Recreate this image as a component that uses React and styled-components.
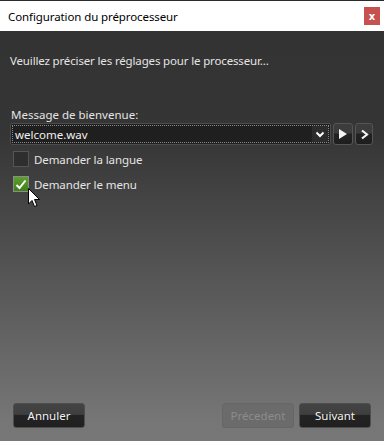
import React from "react"
import styled, { createGlobalStyle } from "styled-components"

const GlobalStyle = createGlobalStyle`
  html, body {
    margin: 0;
    padding: 0;
    background: #333;
  }
  body {
    font-family: "Noto Sans", "Open Sans", sans-serif;
    font-size: 12px;
  }
`

const Window = styled.div`
  width: 384px;
  height: 441px;
  display: flex;
  flex-direction: column;
  border-top: 1px solid #2b2b2b;
  box-sizing: border-box;
`

const TitleBar = styled.div`
  height: 30px;
  background: #fff;
  display: flex;
  align-items: center;
  justify-content: space-between;
  padding-left: 8px;
  flex-shrink: 0;
`

const Title = styled.span`
  color: #000;
  font-size: 11.5px;
  letter-spacing: -0.1px;
`

const CloseButton = styled.div`
  width: 16px;
  height: 18px;
  margin-right: 4px;
  background: #c75050;
  color: #fff;
  font-size: 10px;
  font-weight: bold;
  display: flex;
  align-items: center;
  justify-content: center;
  font-family: "DejaVu Sans", sans-serif;
`

const Body = styled.div`
  position: relative;
  flex: 1;
  display: flex;
  flex-direction: column;
  padding: 22px 11px 13px 10px;
  background: linear-gradient(to bottom, #333 0%, #353535 25%, #767676 95%, #777 100%);
  color: #e4e4e4;
`

const Intro = styled.div`
  line-height: 16px;
  font-size: 11.5px;
  letter-spacing: -0.15px;
`

const FieldLabel = styled.div`
  margin-top: 38px;
  line-height: 16px;
  font-size: 11.5px;
  padding-left: 1px;
`

const ComboRow = styled.div`
  display: flex;
  gap: 2px;
  height: 22px;
`

const Combo = styled.div`
  width: 321px;
  box-sizing: border-box;
  border: 1px solid #4c4c4c;
  border-radius: 2px;
  background: #1f1f1f;
  padding: 1px;
  display: flex;
`

const ComboInner = styled.div`
  flex: 1;
  display: flex;
  align-items: center;
  border: 1px dotted #8a8a8a;
  padding-left: 2px;
  font-size: 11.5px;
  color: #f0f0f0;
`

const ComboValue = styled.span`
  flex: 1;
`

const ComboArrow = styled.div`
  width: 16px;
  height: 100%;
  background: #2c2c2c;
  display: flex;
  align-items: center;
  justify-content: center;
`

const SmallButton = styled.div`
  width: ${p => p.$w}px;
  box-sizing: border-box;
  border: 1px solid #555;
  border-radius: 3px;
  background: linear-gradient(to bottom, #3c3c3c 0%, #3c3c3c 45%, #222 50%, #1e1e1e 100%);
  display: flex;
  align-items: center;
  justify-content: center;
`

const CheckRow = styled.div`
  display: flex;
  align-items: center;
  gap: 5px;
  height: 16px;
  margin-top: ${p => p.$top}px;
  padding-left: 3px;
`

const Box = styled.div`
  width: 16px;
  height: 16px;
  box-sizing: border-box;
  border: 1px solid ${p => (p.$checked ? "#8c8c8c" : "#555")};
  background: ${p => (p.$checked ? "linear-gradient(#5f9f2c, #3f7f1a)" : "#2e2e2e")};
  display: flex;
  align-items: center;
  justify-content: center;
`

const CheckLabel = styled.span`
  font-size: 11.5px;
  color: #e4e4e4;
  letter-spacing: -0.1px;
`

const Footer = styled.div`
  margin-top: auto;
  display: flex;
  align-items: center;
  gap: 5px;
  padding-left: 3px;
  padding-right: 2px;
`

const Button = styled.div`
  width: 72px;
  height: 25px;
  box-sizing: border-box;
  border-radius: 3px;
  display: flex;
  align-items: center;
  justify-content: center;
  font-size: 11.5px;
  border: 1px solid ${p => (p.$disabled ? "#666" : "#4e4e4e")};
  background: ${p =>
    p.$disabled
      ? "#6b6b6b"
      : "linear-gradient(to bottom, #444 0%, #3e3e3e 45%, #232323 50%, #202020 100%)"};
  color: ${p => (p.$disabled ? "#8c8c8c" : "#f2f2f2")};
`

const Spacer = styled.div`
  flex: 1;
`

const Cursor = styled.svg`
  position: absolute;
  left: 28px;
  top: 157px;
`

const ChevronDown = () => (
  <svg width="10" height="7" viewBox="0 0 10 7">
    <path d="M1.5 1.5 L5 5 L8.5 1.5" stroke="#fff" strokeWidth="2" fill="none" />
  </svg>
)

const PlayIcon = () => (
  <svg width="10" height="12" viewBox="0 0 10 12">
    <path d="M1 1 L9 6 L1 11 Z" fill="#f4f4f4" />
  </svg>
)

const NextIcon = () => (
  <svg width="9" height="11" viewBox="0 0 9 11">
    <path d="M2 1.5 L7 5.5 L2 9.5" stroke="#f4f4f4" strokeWidth="2.2" fill="none" />
  </svg>
)

const CheckMark = () => (
  <svg width="12" height="11" viewBox="0 0 12 11">
    <path d="M1.5 6 L4.5 9 L10.5 1.5" stroke="#fff" strokeWidth="2" fill="none" />
  </svg>
)

const App = () => {
  return (
    <>
      <GlobalStyle />
      <Window>
        <TitleBar>
          <Title>Configuration du préprocesseur</Title>
          <CloseButton>x</CloseButton>
        </TitleBar>
        <Body>
          <Intro>Veuillez préciser les réglages pour le processeur...</Intro>
          <FieldLabel>Message de bienvenue:</FieldLabel>
          <ComboRow>
            <Combo>
              <ComboInner>
                <ComboValue>welcome.wav</ComboValue>
                <ComboArrow>
                  <ChevronDown />
                </ComboArrow>
              </ComboInner>
            </Combo>
            <SmallButton $w={20}>
              <PlayIcon />
            </SmallButton>
            <SmallButton $w={18}>
              <NextIcon />
            </SmallButton>
          </ComboRow>
          <CheckRow $top={6}>
            <Box />
            <CheckLabel>Demander la langue</CheckLabel>
          </CheckRow>
          <CheckRow $top={9}>
            <Box $checked>
              <CheckMark />
            </Box>
            <CheckLabel>Demander le menu</CheckLabel>
          </CheckRow>
          <Footer>
            <Button>Annuler</Button>
            <Spacer />
            <Button $disabled>Précedent</Button>
            <Button>Suivant</Button>
          </Footer>
          <Cursor width="13" height="20" viewBox="0 0 13 20">
            <path
              d="M0.5 0.5 L0.5 16 L4 12.5 L6.5 18.5 L9 17.5 L6.5 11.5 L11.5 11.5 Z"
              fill="#fff"
              stroke="#000"
              strokeWidth="1"
            />
          </Cursor>
        </Body>
      </Window>
    </>
  )
}

export default App
